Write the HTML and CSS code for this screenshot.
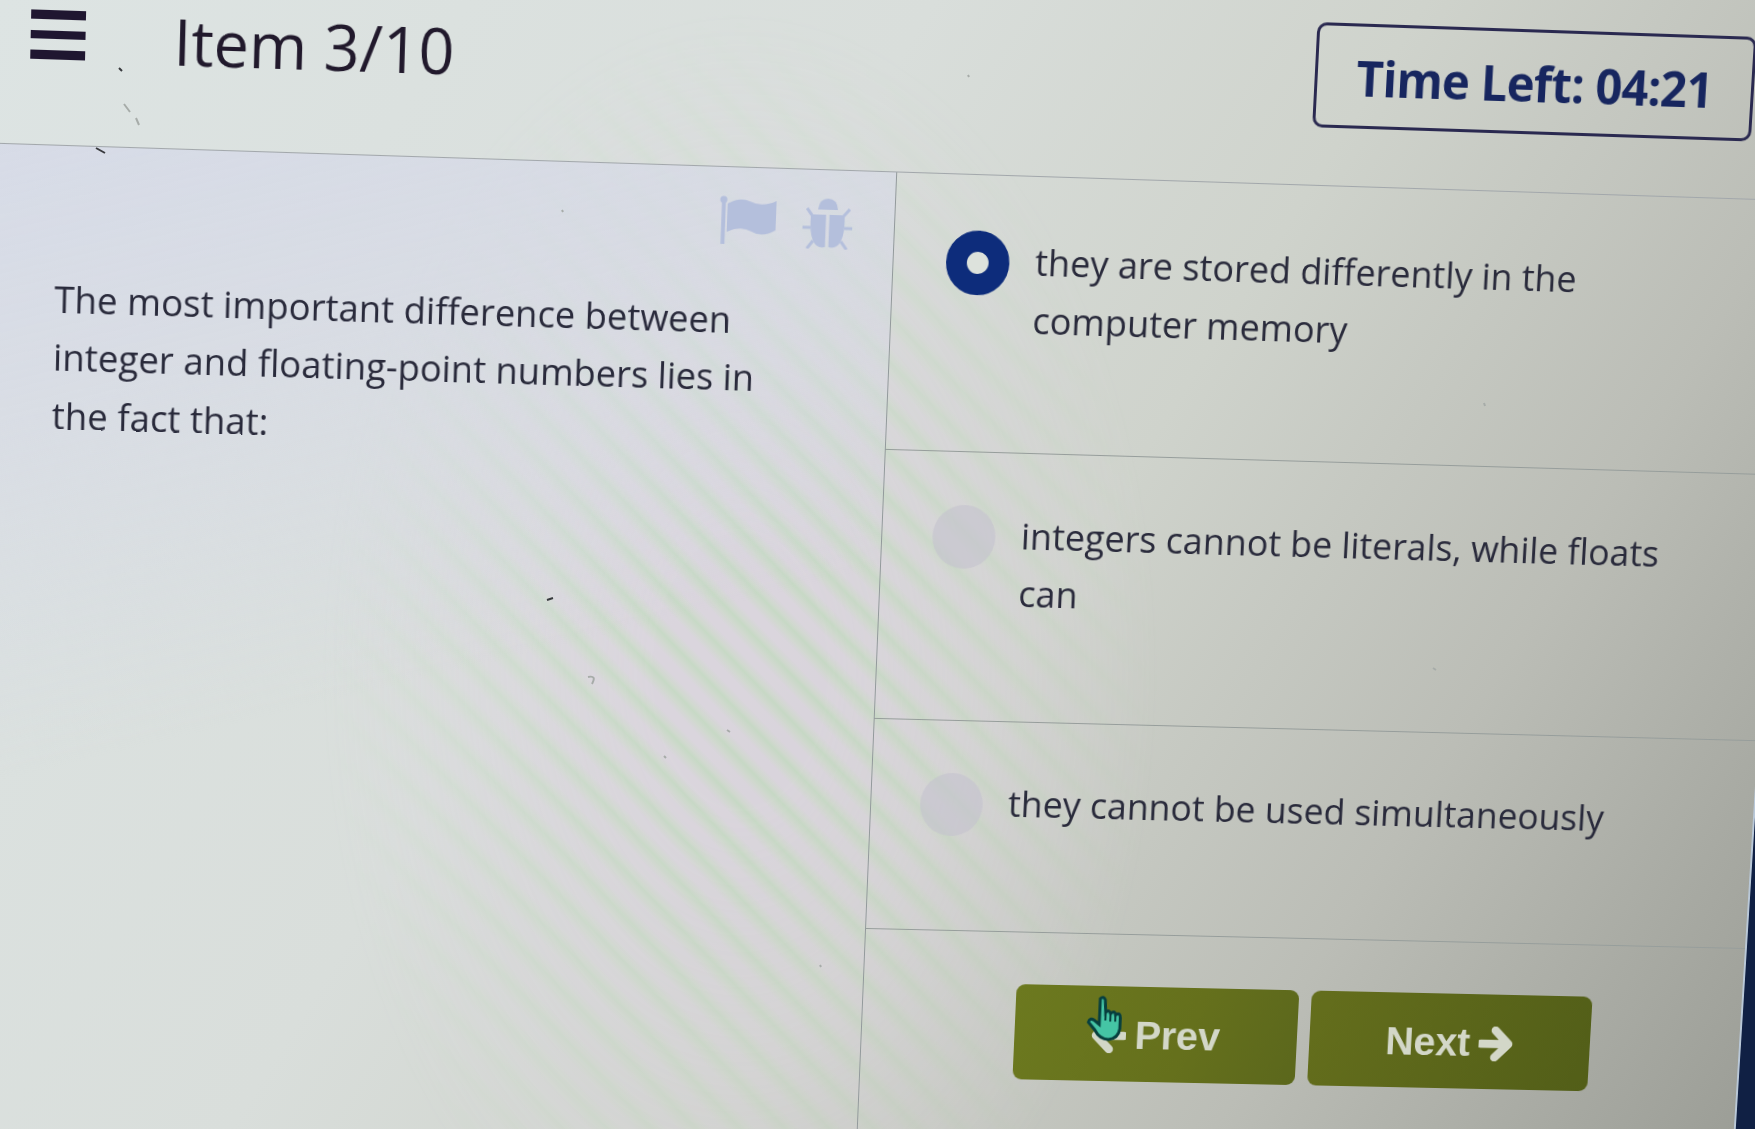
FILE: index.html
```html
<!DOCTYPE html>
<html lang="en">
<head>
<meta charset="utf-8">
<title>Item 3/10</title>
<link rel="stylesheet" href="styles.css">
</head>
<body>
<div class="screen">
  <div class="sheen"></div>
  <div class="page">
    <header class="header">
      <div class="menu"><span></span><span></span><span></span></div>
      <h1 class="title">Item 3/10</h1>
      <div class="timer"><span>Time Left: 04:21</span></div>
    </header>
    <main class="main">
      <section class="question">
        <div class="tools">
          <svg class="tool" viewBox="0 0 57 48"><circle cx="4" cy="4" r="3.6"/><path d="M2.2 5h4v43h-4zM8 8Q19 1 30 5Q43 11 57 4V33Q44 41 33 35Q21 29 8 36Z"/></svg>
          <svg class="tool bug" viewBox="0 0 50 50"><path d="M15 11Q16 0 25 0T35 11ZM8 16H23.3V48Q15 50 11 42Q7 34 8 16ZM26.7 16H42Q43 34 39 42Q35 50 26.7 48Z"/><path class="legs" d="M10 18L4 10M40 18L47 10M8 29H0M42 29H50M11 42L5 50M39 42L45 50"/></svg>
        </div>
        <p class="prompt">The most important difference between<br>integer and floating-point numbers lies in<br>the fact that:</p>
      </section>
      <section class="answers">
        <div class="option first"><i class="radio checked"></i><p>they are stored differently in the<br>computer memory</p></div>
        <div class="option second"><i class="radio"></i><p>integers cannot be literals, while floats<br>can</p></div>
        <div class="option third"><i class="radio"></i><p>they cannot be used simultaneously</p></div>
        <div class="nav">
          <button class="btn"><svg class="arrow" viewBox="0 0 36 36"><path d="M34 18H6M19 4L5 18L19 32"/></svg>Prev
            <svg class="cursor" viewBox="0 0 36 46"><path d="M13 3Q16 0 18 4L19 17Q22 13 24 18Q28 14 29 19Q34 16 34 22V33Q33 43 23 44Q14 44 9 35L2 27Q3 22 8 25L13 29Z"/><path class="creases" d="M19 17V25M24 18V26M29 19V26"/></svg>
          </button>
          <button class="btn">Next<svg class="arrow" viewBox="0 0 36 36"><path d="M2 18H30M17 4L31 18L17 32"/></svg></button>
        </div>
      </section>
      <div class="edge"></div>
    </main>
  </div>
  <svg class="specks" viewBox="0 0 1755 1129"><path d="M119 68L122 71M96 148L105 153M547 600L553 598"/><path class="faint" d="M124 104L130 112M136 118L139 125M1433 668L1436 670M968 75L969 77M820 965L821 967M588 677Q597 675 592 684M1484 403L1485 406M562 210L563 212M664 756L666 758M727 730L730 732"/></svg>
</div>
</body>
</html>
```
FILE: styles.css
```css
* { box-sizing: border-box; }
body { margin: 0; font-family: "Open Sans", "Noto Sans", sans-serif; color: #292a3b; }
h1, p { margin: 0; font-weight: 400; }

.screen {
  position: relative;
  width: 1755px;
  height: 1129px;
  overflow: hidden;
  background: linear-gradient(122deg, #dde4e3 0%, #d9dedb 38%, #cfd3cc 58%, #bbbdb6 78%, #9b9d96 100%);
}

/* The monitor is seen at a slight angle */
.page {
  width: 1900px;
  margin: -80px 0 0 -40px;
  transform-origin: 40px 230px;
  transform: matrix3d(1.014483, 0.032284, 0, 0.0000121183, -0.021332, 1.022863, 0, 0.0000232184, 0, 0, 1, 0, 4, -6, 0, 1);
}

.header {
  display: flex;
  height: 230px;
  padding: 67px 107px 0 64px;
  border-bottom: 1.5px solid #a2a7ab;
}
.menu { display: flex; flex-direction: column; gap: 11px; width: 54px; padding-top: 31px; }
.menu span { height: 8.5px; background: #1f1630; }
.title { margin: 24px 0 0 87px; font-size: 62.3px; line-height: 66px; color: #21192c; white-space: nowrap; }
.timer {
  display: flex;
  justify-content: center;
  align-items: center;
  width: 448px;
  height: 104px;
  margin-right: -2px;
  margin-left: auto;
  margin-top: 1px;
  padding-top: 2px;
  border: 3.5px solid #2a2950;
  border-radius: 10px;
  font-size: 48px;
  font-weight: 700;
  letter-spacing: -0.7px;
  color: #17265f;
  white-space: nowrap;
}

.main { display: grid; grid-template-columns: 930px 910px 60px; height: 1040px; }
.question {
  padding: 28px 42px 0 93px;
  border-right: 1.5px solid #92999b;
  background: linear-gradient(165deg, #d5d9e8cc 0%, #d7dae6aa 22%, #d7dae600 50%);
}
.tools { display: flex; justify-content: flex-end; gap: 27px; }
.tool { width: 57px; height: 48px; fill: #b4bfdc; }
.bug { width: 50px; height: 50px; }
.legs { fill: none; stroke: #b4bfdc; stroke-width: 3; }
.prompt { margin-top: 43.5px; font-size: 36.4px; line-height: 57.8px; white-space: nowrap; }

.answers { display: flex; flex-direction: column; }
.option { display: flex; gap: 26px; padding: 55px 0 0 53px; border-bottom: 1.2px solid #969d9b; font-size: 36.65px; line-height: 58px; white-space: nowrap; }
.first { height: 276px; }
.second { height: 271px; padding: 53px 0 0 51px; }
.third { height: 214px; padding: 53px 0 0 50px; }
.radio { flex: none; width: 64px; height: 64px; border-radius: 50%; background: #c4c2cda0; }
.checked { border: 21px solid #0d2c7b; background: #dde2dc; }

.nav { display: flex; justify-content: center; gap: 13px; padding-top: 53px; }
.btn {
  position: relative;
  display: flex;
  justify-content: center;
  align-items: center;
  gap: 9px;
  width: 292px;
  height: 98px;
  padding: 3px 0 0;
  border: 0;
  border-radius: 9px;
  background: linear-gradient(110deg, #6c791f, #65701c 60%, #5b671c);
  font: 700 41px "Liberation Sans", Arial, sans-serif;
  letter-spacing: -0.2px;
  color: #d3d7c8;
}
.btn + .btn { background: linear-gradient(110deg, #646e1c, #525e18); }
.arrow { width: 36px; height: 36px; fill: none; stroke: #d3d7c8; stroke-width: 8.5; stroke-linecap: round; stroke-linejoin: round; }
.cursor { position: absolute; left: 73px; top: 10px; width: 38px; height: 47px; fill: #45c5a5; stroke: #073f3e; stroke-width: 3; }
.creases { fill: none; stroke-width: 2; }
.edge { border-left: 2px solid #b9c8d8; background: #102044; }

/* Soft interference bands across the middle of the panel */
.sheen {
  position: absolute;
  inset: 0;
  background: repeating-linear-gradient(46deg, #dcd4e0 0 8px, #d0d9ce 15px, #c3d9c1 21px, #d0d9ce 25px, #dcd4e0 32px);
  opacity: 0.75;
  mask-image: radial-gradient(ellipse 420px 660px at 740px 670px, #000 20%, transparent 100%);
}
.specks { position: absolute; inset: 0; fill: none; stroke: #383a3e; stroke-width: 2; pointer-events: none; }
.faint { stroke: #a7aca9; }
```
